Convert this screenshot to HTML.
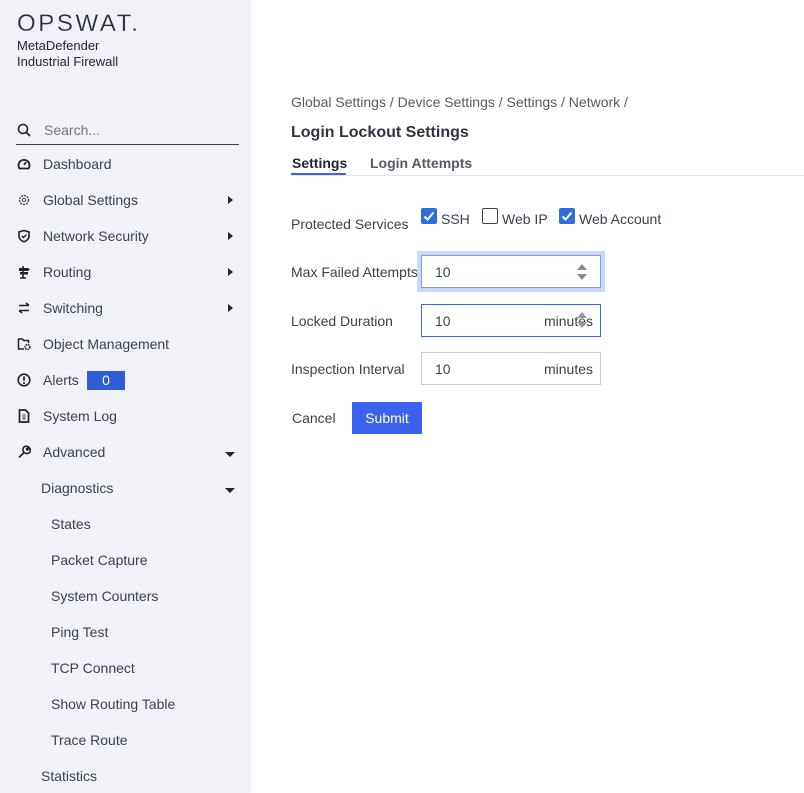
<!DOCTYPE html>
<html><head><meta charset="utf-8"><style>
*{margin:0;padding:0;box-sizing:border-box}
body{width:804px;height:793px;overflow:hidden;background:#fff;font-family:"Liberation Sans",Arial,sans-serif;font-size:14px;color:#3b4150;position:relative}
#sb{position:absolute;left:0;top:0;width:250px;height:793px;background:#f1f2f8;box-shadow:1px 0 3px rgba(0,0,0,.06)}
.abs{position:absolute;white-space:nowrap}
.logo{left:17px;top:10px;font-size:24px;letter-spacing:2.6px;color:#2a2f3a;font-weight:normal;-webkit-text-stroke:0.2px #f1f2f8}
.sub{left:17px;font-size:13px;color:#1f2430}
.it{left:43px;line-height:16px}
.ic{position:absolute;left:17px;width:14px;height:14px}
.car{position:absolute;left:228px;width:0;height:0;border-top:4px solid transparent;border-bottom:4px solid transparent;border-left:5px solid #1f2430}
.dn{position:absolute;left:225px;border-left:5px solid transparent;border-right:5px solid transparent;border-top:5px solid #1f2430}
.lab{left:291px;color:#3b4150}
.inp{position:absolute;left:421px;width:180px;height:33px;border:1px solid #ccc;background:#fff}
.inp span{position:absolute;left:13px;top:8px}
.inp .m{left:auto;right:7px}
</style></head><body>
<div id="sb">
<div class="abs logo">OPSWAT.</div>
<div class="abs sub" style="top:38px">MetaDefender</div>
<div class="abs sub" style="top:54px">Industrial Firewall</div>
<svg class="ic" style="top:123px" viewBox="0 0 14 14"><circle cx="6" cy="6" r="4.5" fill="none" stroke="#222" stroke-width="1.6"/><path d="M9.5 9.5L13 13" stroke="#222" stroke-width="1.8"/></svg>
<div class="abs" style="left:44px;top:122px;color:#777">Search...</div>
<div class="abs" style="left:16px;top:144px;width:223px;height:1px;background:#3b4150"></div>
<svg class="ic" style="top:157px" viewBox="0 0 14 14"><path d="M2.5 11.5A5.5 5.5 0 1 1 11.5 11.5Z" fill="none" stroke="#222" stroke-width="1.8"/><path d="M7 8L9 5" stroke="#222" stroke-width="1.6"/></svg>
<div class="abs it" style="top:156px">Dashboard</div>
<svg class="ic" style="top:193px" viewBox="0 0 14 14"><circle cx="7" cy="7" r="4.5" fill="none" stroke="#444" stroke-width="1.3" stroke-dasharray="2 1"/><circle cx="7" cy="7" r="1.7" fill="none" stroke="#444"/></svg>
<div class="abs it" style="top:192px">Global Settings</div><div class="car" style="top:196px"></div>
<svg class="ic" style="top:229px" viewBox="0 0 14 14"><path d="M7 1.5L12 3v4c0 3-2.5 5-5 5.8C4.5 12 2 10 2 7V3z" fill="none" stroke="#222" stroke-width="1.6"/><path d="M4.8 7l1.6 1.6L9.4 5.6" fill="none" stroke="#222" stroke-width="1.4"/></svg>
<div class="abs it" style="top:228px">Network Security</div><div class="car" style="top:232px"></div>
<svg class="ic" style="top:265px" viewBox="0 0 14 14"><path d="M6 1v12M3 13h6" stroke="#222" stroke-width="1.6"/><path d="M2 3h9l2 1.5-2 1.5H2zM3 7h8v2.5H3z" fill="#222"/></svg>
<div class="abs it" style="top:264px">Routing</div><div class="car" style="top:268px"></div>
<svg class="ic" style="top:301px" viewBox="0 0 14 14"><path d="M2 4.5h10M9 2l3 2.5M12 9.5H2M5 12l-3-2.5" fill="none" stroke="#222" stroke-width="1.5"/></svg>
<div class="abs it" style="top:300px">Switching</div><div class="car" style="top:304px"></div>
<svg class="ic" style="top:337px" viewBox="0 0 14 14"><path d="M7 12H1.5V2h4l1 1.5h5V6" fill="none" stroke="#222" stroke-width="1.5"/><circle cx="10.5" cy="10" r="2.4" fill="none" stroke="#222" stroke-width="1.6" stroke-dasharray="1.5 0.8"/></svg>
<div class="abs it" style="top:336px">Object Management</div>
<svg class="ic" style="top:373px" viewBox="0 0 14 14"><circle cx="7" cy="7" r="5.8" fill="none" stroke="#222" stroke-width="1.6"/><path d="M7 3.5v4.3" stroke="#222" stroke-width="1.7"/><circle cx="7" cy="10" r="1" fill="#222"/></svg>
<div class="abs it" style="top:372px">Alerts</div>
<div class="abs" style="left:87px;top:371px;width:38px;height:19px;background:#2e5cd6;color:#fff;text-align:center;line-height:19px">0</div>
<svg class="ic" style="top:409px" viewBox="0 0 14 14"><path d="M2.5 1h6l3 3v9h-9z" fill="none" stroke="#222" stroke-width="1.7"/><path d="M5.5 6h3M5.5 8h3M5.5 10h3" stroke="#222"/></svg>
<div class="abs it" style="top:408px">System Log</div>
<svg class="ic" style="top:445px" viewBox="0 0 14 14"><path d="M2 12.5l5.5-5.5M7 7a3 3 0 1 1 4.5-5L9.5 4l1 1 2-2A3 3 0 0 1 7.5 7.5" fill="none" stroke="#222" stroke-width="1.6"/></svg>
<div class="abs it" style="top:444px">Advanced</div><div class="dn" style="top:452px"></div>
<div class="abs" style="left:41px;top:480px">Diagnostics</div><div class="dn" style="top:488px"></div>
<div class="abs" style="left:51px;top:516px">States</div>
<div class="abs" style="left:51px;top:552px">Packet Capture</div>
<div class="abs" style="left:51px;top:588px">System Counters</div>
<div class="abs" style="left:51px;top:624px">Ping Test</div>
<div class="abs" style="left:51px;top:660px">TCP Connect</div>
<div class="abs" style="left:51px;top:696px">Show Routing Table</div>
<div class="abs" style="left:51px;top:732px">Trace Route</div>
<div class="abs" style="left:41px;top:768px">Statistics</div>
</div>

<div class="abs" style="left:291px;top:94px;color:#555b66">Global Settings / Device Settings / Settings / Network /</div>
<div class="abs" style="left:291px;top:124px;font-size:16px;font-weight:bold;color:#2f3542">Login Lockout Settings</div>
<div class="abs" style="left:292px;top:155px;font-weight:bold;color:#1f2430">Settings</div>
<div class="abs" style="left:370px;top:155px;font-weight:bold;color:#555b66">Login Attempts</div>
<div class="abs" style="left:291px;top:175px;width:513px;height:1px;background:#e4e4e4"></div>
<div class="abs" style="left:291px;top:173px;width:55px;height:2px;background:#3b63f0"></div>

<div class="abs lab" style="top:216px">Protected Services</div>
<svg class="abs" style="left:421px;top:208px" width="16" height="16"><rect width="16" height="16" rx="2" fill="#2e6fe0"/><path d="M3.5 8.5l3 3 6-7" fill="none" stroke="#fff" stroke-width="2"/></svg>
<div class="abs" style="left:441px;top:211px">SSH</div>
<div class="abs" style="left:482px;top:208px;width:16px;height:16px;border:1px solid #444;border-radius:2px"></div>
<div class="abs" style="left:502px;top:211px">Web IP</div>
<svg class="abs" style="left:559px;top:208px" width="16" height="16"><rect width="16" height="16" rx="2" fill="#2e6fe0"/><path d="M3.5 8.5l3 3 6-7" fill="none" stroke="#fff" stroke-width="2"/></svg>
<div class="abs" style="left:579px;top:211px">Web Account</div>

<div class="abs lab" style="top:264px">Max Failed Attempts</div>
<div class="inp" style="top:255px;border:1px solid #7b9cf0;box-shadow:0 0 0 4px #cdd7fa"><span>10</span>
<svg style="position:absolute;right:13px;top:7px" width="10" height="18"><path d="M0 7L5 1l5 6z M0 11l5 6 5-6z" fill="#888"/></svg></div>
<div class="abs lab" style="top:313px">Locked Duration</div>
<div class="inp" style="top:304px;border:1px solid #3b63e0"><span>10</span><span class="m">minutes</span>
<svg style="position:absolute;right:13px;top:6px" width="10" height="18"><path d="M0 7L5 1l5 6z M0 11l5 6 5-6z" fill="#999"/></svg></div>
<div class="abs lab" style="top:361px">Inspection Interval</div>
<div class="inp" style="top:352px"><span>10</span><span class="m">minutes</span></div>

<div class="abs" style="left:292px;top:410px">Cancel</div>
<div class="abs" style="left:352px;top:402px;width:70px;height:32px;background:#3b63f0;color:#fff;text-align:center;line-height:32px">Submit</div>
</body></html>
